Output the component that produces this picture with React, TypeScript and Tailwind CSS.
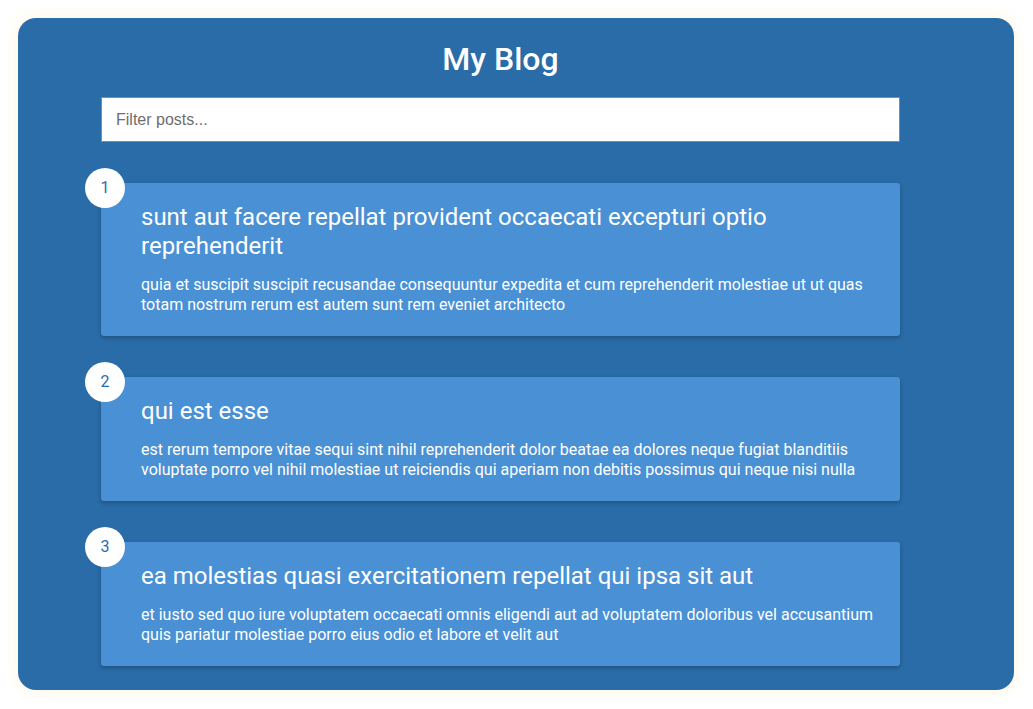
import React from "react";

const POSTS = [
  {
    id: 1,
    title:
      "sunt aut facere repellat provident occaecati excepturi optio reprehenderit",
    body: "quia et suscipit suscipit recusandae consequuntur expedita et cum reprehenderit molestiae ut ut quas totam nostrum rerum est autem sunt rem eveniet architecto",
  },
  {
    id: 2,
    title: "qui est esse",
    body: "est rerum tempore vitae sequi sint nihil reprehenderit dolor beatae ea dolores neque fugiat blanditiis voluptate porro vel nihil molestiae ut reiciendis qui aperiam non debitis possimus qui neque nisi nulla",
  },
  {
    id: 3,
    title: "ea molestias quasi exercitationem repellat qui ipsa sit aut",
    body: "et iusto sed quo iure voluptatem occaecati omnis eligendi aut ad voluptatem doloribus vel accusantium quis pariatur molestiae porro eius odio et labore et velit aut",
  },
];

export default function App() {
  const [filter, setFilter] = React.useState("");
  const posts = POSTS.filter((p) =>
    (p.title + " " + p.body).toLowerCase().includes(filter.toLowerCase())
  );

  return (
    <div className="min-h-[709px] bg-white p-[18px] font-['Roboto',sans-serif]">
      <div className="w-[996px] rounded-[18px] bg-[#2a6ca8] pt-[22px] pb-[24px] pl-[83px] pr-[114px] shadow-[0_0_16px_rgba(255,225,160,0.35)]">
        <h1 className="text-center text-[32px] leading-[38px] font-medium text-white">
          My Blog
        </h1>
        <input
          type="text"
          value={filter}
          onChange={(e) => setFilter(e.target.value)}
          placeholder="Filter posts..."
          className="mt-[19px] block h-[45px] w-[799px] border border-[#8a8a8a] bg-white px-[14px] font-['Liberation_Sans',sans-serif] text-base text-gray-800 outline-none placeholder:text-[#6e6e6e]"
        />
        <div className="mt-[41px] flex flex-col gap-[41px]">
          {posts.map((post, i) => (
            <div
              key={post.id}
              className="relative rounded-[3px] bg-[#4a90d4] pt-[20px] pb-[21px] pl-[40px] pr-[18px] shadow-[0_2px_4px_rgba(0,0,0,0.25)]"
            >
              <div className="absolute -left-[16px] -top-[15px] flex h-[40px] w-[40px] items-center justify-center rounded-full bg-white text-[16px] leading-none text-[#2a6ca8]">
                {i + 1}
              </div>
              <h2 className="text-[24px] leading-[29px] font-normal text-white">
                {post.title}
              </h2>
              <p className="mt-[14px] text-base leading-[20px] text-white">
                {post.body}
              </p>
            </div>
          ))}
        </div>
      </div>
    </div>
  );
}
